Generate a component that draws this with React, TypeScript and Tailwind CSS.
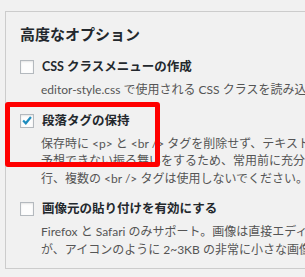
const font = { fontFamily: 'Lato, "Noto Sans CJK JP", sans-serif' };

type Option = {
    label: string;
    checked: boolean;
    lines: string[];
};

const options: Option[] = [
    {
        label: 'CSS クラスメニューの作成',
        checked: false,
        lines: ['editor-style.css で使用される CSS クラスを読み込み、スタイルメニューを作成します。'],
    },
    {
        label: '段落タグの保持',
        checked: true,
        lines: [
            '保存時に <p> と <br /> タグを削除せず、テキストモードでも表示します。',
            '予想できない振る舞いをするため、常用前に充分テストしてください。',
            '行、複数の <br /> タグは使用しないでください。',
        ],
    },
    {
        label: '画像元の貼り付けを有効にする',
        checked: false,
        lines: [
            'Firefox と Safari のみサポート。画像は直接エディタに貼り付けられます',
            'が、アイコンのように 2~3KB の非常に小さな画像のみ推奨します。',
        ],
    },
];

const Checkbox = ({ checked }: { checked: boolean }) => (
    <span className="flex h-[14px] w-[14px] shrink-0 items-center justify-center border border-[#b4b9be] bg-[#fdfdfd] shadow-[inset_0_1px_2px_rgba(0,0,0,0.1)]">
        {checked && (
            <svg viewBox="0 0 14 14" className="h-[13px] w-[13px]">
                <path d="M2.5 7 L5.6 10.2 L11.6 3" fill="none" stroke="#1e8cbe" strokeWidth="2.6" />
            </svg>
        )}
    </span>
);

const App = () => {
    return (
        <div className="relative h-[277px] w-[305px] overflow-hidden bg-[#f1f1f1]" style={font}>
            {/* Panel */}
            <div className="ml-[5px] mt-[11px] w-[340px] border border-[#cccccc] bg-[#f1f1f1] pb-[10px] pl-[14px] pt-[12px]">
                <h2 className="h-[20px] text-[15px] font-bold leading-[20px] text-[#23282d]">高度なオプション</h2>

                <div className="mt-[14px] flex flex-col gap-[13px]">
                    {options.map((opt) => (
                        <div key={opt.label}>
                            <div className="flex items-center gap-[8px]">
                                <Checkbox checked={opt.checked} />
                                <span className="text-[12.5px] font-bold leading-[18px] text-[#23282d]">{opt.label}</span>
                            </div>
                            <div className="mt-[5px] pl-[21px] text-[12px] leading-[17.5px] text-[#555]">
                                {opt.lines.map((line) => (
                                    <p key={line} className="whitespace-nowrap">
                                        {line}
                                    </p>
                                ))}
                            </div>
                        </div>
                    ))}
                </div>
            </div>

            {/* Highlight */}
            <div className="absolute left-[5px] top-[102px] h-[65px] w-[155px] rounded-[3px] border-[5px] border-[#ff0000]" />
        </div>
    );
};

export default App;
